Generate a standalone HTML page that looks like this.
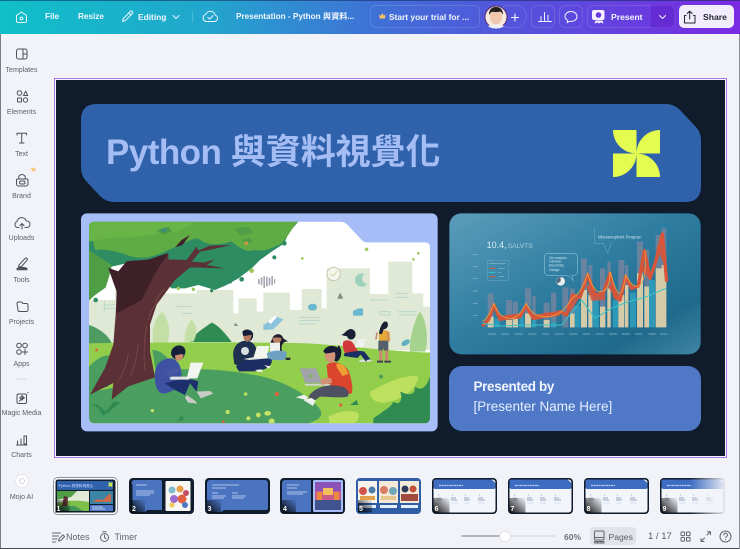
<!DOCTYPE html>
<html lang="zh-Hant">
<head>
<meta charset="utf-8">
<title>Python 與資料視覺化</title>
<style>
html,body{margin:0;padding:0;width:740px;height:549px;overflow:hidden;background:#f2f3f8}
body{position:relative;font-family:"Liberation Sans","Noto Sans CJK TC",sans-serif}
.a{position:absolute;white-space:nowrap}
#top{position:absolute;left:0;top:0;width:740px;height:33.5px;background:linear-gradient(92deg,#0fc0c8 0%,#22a6cd 28%,#3f72d6 50%,#5a4bdd 75%,#7a2be2 100%);box-shadow:inset 0 1px 0 rgba(20,40,90,.55)}
.t{color:#f1f6ff;font-size:8.2px;font-weight:bold;line-height:12px;top:11px}
.pill{position:absolute;top:5px;height:23px;border:1px solid rgba(255,255,255,.13);box-sizing:border-box;border-radius:6px}
.l{position:absolute;left:0;width:43px;text-align:center;font-size:7px;line-height:9px;color:#5a616b;white-space:nowrap}
.b{color:#5f6670;font-size:9px;line-height:12px;top:531px}
svg{position:absolute}
</style>
</head>
<body>
<div id="top"></div>
<div class="a t" style="left:45px">File</div>
<div class="a t" style="left:78px">Resize</div>
<div class="a t" style="left:138px;font-size:8.4px">Editing</div>
<div class="a t" style="left:236px;font-size:8.2px;width:122px;overflow:hidden">Presentation - Python 與資料...</div>
<div class="pill" style="left:370px;width:110px"></div>
<div class="a t" style="left:389px;font-size:8.4px">Start your trial for ...</div>
<div class="pill" style="left:497px;width:30px;border-radius:12px"></div>
<div class="pill" style="left:531px;width:24px"></div>
<div class="pill" style="left:559px;width:24px"></div>
<div class="pill" style="left:587px;width:88px"></div>
<div class="a" style="left:651px;top:5px;width:24px;height:23px;background:rgba(90,20,190,.35);border-radius:0 6px 6px 0"></div>
<div class="a t" style="left:611px;font-size:8.6px">Present</div>
<div class="a" style="left:679px;top:5px;width:55px;height:23px;background:#f2edfd;border-radius:5px"></div>
<div class="a t" style="left:703px;color:#23262c;font-size:8.6px">Share</div>

<!-- top icons -->
<svg style="left:0;top:0" width="740" height="34" viewBox="0 0 740 34" fill="none" stroke="#eef5ff" stroke-width="1" stroke-linecap="round" stroke-linejoin="round">
  <path d="M16.5 15.5 21.5 12l5 3.5V21a1.5 1.5 0 0 1-1.5 1.5h-7a1.500 1.500 0 0 1-1.500-1.500z"/><circle cx="21.5" cy="18.5" r="1.4"/>
  <path d="M122.500 21.500l.8-3 7-7a1.400 1.400 0 0 1 2 2l-7 7z M129 13l2 2"/>
  <path d="M173 15.500l3 3 3-3"/>
  <path d="M192.500 12v10" stroke-opacity=".2"/>
  <path d="M206 21.500h8.500a3.200 3.200 0 0 0 .6-6.300 4.800 4.800 0 0 0-9.200-.9 3.700 3.700 0 0 0 .1 7.200z"/><path d="M207.800 17.400l1.900 1.700 3.200-3.400"/>
  <path d="M379 14.500l1.500 1.200 1.800-2.400 1.800 2.400 1.500-1.200-.7 4h-5.200z" fill="#f3c36a" stroke="none"/>
  <path d="M515 14v7M511.500 17.500h7" stroke-width="1.100"/>
  <path d="M538.500 21.500h13M541 20.500v-4M544.500 20.500v-8M548 20.500v-5.500"/>
  <path d="M571 11.500c3.500 0 6 2.200 6 5s-2.500 5-6 5c-.7 0-1.300-.1-1.900-.3l-1.800 1.600.2-2.500c-1.600-.9-2.500-2.300-2.500-3.800 0-2.800 2.500-5 6-5z"/>
  <path d="M594 10h8.500a2 2 0 0 1 2 2v6a2 2 0 0 1-2 2h-8.500a2 2 0 0 1-2-2v-6a2 2 0 0 1 2-2z" fill="#f4f0ff" stroke="none"/>
  <path d="M595.500 20.500l-1 3 3-1 1.500 1 1.500-1 3 1-1-3z" fill="#f4f0ff" stroke="none"/>
  <circle cx="598.500" cy="15" r="2.800" fill="#6a3bdc" stroke="none"/>
  <path d="M659.500 15.500l3 3 3-3"/>
  <path d="M686 15.500h-1.500v7.500h10.500v-7.500h-1.500M689.700 19v-7.500M687.300 13.500l2.400-2.400 2.400 2.400" stroke="#23262c"/>
  <circle cx="496" cy="17" r="11" fill="#f7e7dc" stroke="#5b2d75" stroke-width="1"/>
  <path d="M489 15c0-6 3-8 7-8s7 2 7 8c-1-2-2-3-3-3.500-2 1-6 1-8 .2-1 .8-2 1.800-3 3.300z" fill="#26201f" stroke="none"/>
  <path d="M490 15.500c0 6 3 9 6 9s6-3 6-9c-1-2-2-3.300-3-3.800-2 .7-4 .7-6 .1-1 .7-2 1.900-3 3.700z" fill="#f0c6ac" stroke="none"/>
  <path d="M488 26c3-2 13-2 16 0-2 2-5 2.500-8 2.500s-6-.5-8-2.500z" fill="#eef0f5" stroke="none"/>
</svg>

<!-- sidebar + border icons -->
<svg style="left:0;top:34px" width="54" height="480" viewBox="0 34 54 480" fill="none" stroke="#4b525c" stroke-width="1" stroke-linecap="round" stroke-linejoin="round">
  <rect x="16.500" y="49" width="10.500" height="10" rx="2"/><path d="M23 49v10M23 54h4"/>
  <circle cx="19.500" cy="93" r="2.300"/><path d="M23.500 95.500l2.200-4.300 2 4.300z"/><rect x="17.500" y="98" width="4" height="4" rx=".8"/><circle cx="25.500" cy="100" r="2.200"/>
  <path d="M17 135v-1.800h9.500V135M21.700 133.200V143M19.500 143h4.500"/>
  <path d="M17.500 179h9.500a1 1 0 0 1 1 1v4a2 2 0 0 1-2 2h-7.500a2 2 0 0 1-2-2v-4a1 1 0 0 1 1-1z"/><path d="M19 179c-1-3 1-4.500 3-4.500s4 1.500 3 4.500"/><rect x="19.500" y="181" width="5.500" height="3" rx="1.500"/>
  <path d="M33 171.500l-3-3.500 1.800.8 1.200-1.800 1.200 1.800 1.800-.8-1 3.500z" fill="#f7c779" stroke="none"/>
  <path d="M19 227.500h-1.500a3 3 0 0 1-.5-5.800 4.800 4.800 0 0 1 9.300-.8 3.300 3.300 0 0 1 .7 6.600H25"/><path d="M22 229v-5.500M20 225.500l2-2 2 2"/>
  <path d="M19 265l6-6.500a1.300 1.300 0 0 1 2 1.800l-5.500 6.200-3 .5z"/><path d="M17 268.500c3-1.500 8-1.500 10 0v1.300H17z" fill="#4b525c"/>
  <path d="M17 303.500a1.500 1.500 0 0 1 1.500-1.500h3l1.500 1.500h3.500a1.500 1.500 0 0 1 1.500 1.500v5a1.500 1.500 0 0 1-1.500 1.500h-7a1.500 1.500 0 0 1-1.500-1.500z"/>
  <circle cx="19" cy="345.500" r="2.300"/><circle cx="25" cy="345.500" r="2.300"/><circle cx="19" cy="352" r="2.300"/><path d="M25 349.500v5M22.500 352h5"/>
  <path d="M17.500 379h8.500" stroke="#d6d8de"/>
  <rect x="17" y="394" width="9.500" height="9.500" rx="1.500"/><path d="M19.500 401l4-4M22 395.500l1 1.500 1.500.8-1.500.8-1 1.500-.8-1.500-1.500-.8 1.500-.8z M28 392.500v.2" stroke-width="1.100"/>
  <path d="M16.500 445h10.500M17.500 444v-3M21 444v-5M24 444v-8h2.500v8z"/>
  <circle cx="22" cy="481" r="6.500" fill="#fff" stroke="#e6e7ec"/><circle cx="22" cy="481" r="2.500" stroke="#c8ccd3" stroke-width=".8"/>
</svg>
<div class="l" style="top:66px">Templates</div>
<div class="l" style="top:108px">Elements</div>
<div class="l" style="top:150px">Text</div>
<div class="l" style="top:192px">Brand</div>
<div class="l" style="top:234px">Uploads</div>
<div class="l" style="top:276px">Tools</div>
<div class="l" style="top:318px">Projects</div>
<div class="l" style="top:360px">Apps</div>
<div class="l" style="top:409px">Magic Media</div>
<div class="l" style="top:451px">Charts</div>
<div class="l" style="top:493px">Mojo AI</div>

<!-- canvas -->
<div class="a" style="left:54px;top:78px;width:673px;height:380px;box-sizing:border-box;border:1px solid #a875e6;background:#f7f5fd"></div>
<div class="a" style="left:56px;top:80px;width:669px;height:376px;background:#101c2c"></div>

<svg style="left:0;top:0" width="740" height="549" viewBox="0 0 740 549">
  <path d="M97 104H666Q674 104 680 110L695 126Q701 132 701 140V186Q701 202 685 202H114Q106 202 100 196L87 182Q81 176 81 168V120Q81 104 97 104Z" fill="#2f62aa"/>
  <g fill="#e4fb4f">
    <path d="M613 130H636.500V153.500A23.500 23.500 0 0 1 613 130Z"/>
    <path d="M660 130V153.500H636.500A23.500 23.500 0 0 1 660 130Z"/>
    <path d="M613 153.500H636.500A23.500 23.500 0 0 1 613 177Z"/>
    <path d="M636.500 153.500A23.500 23.500 0 0 1 660 177H636.500Z"/>
  </g>
  <rect x="449" y="366" width="252" height="65" rx="13" fill="#4f78c6"/>
</svg>
<div class="a" style="left:106px;top:131px;font-size:35px;font-weight:bold;line-height:44px;color:#a5bdf5"><span style="letter-spacing:-.55px">Python</span><span style="letter-spacing:-.1px"> 與資料視覺化</span></div>
<div class="a" style="left:473.500px;top:378px;font-size:13.500px;font-weight:bold;line-height:17px;letter-spacing:-.35px;color:#f0f5ff">Presented by</div>
<div class="a" style="left:473.500px;top:398px;font-size:13.500px;line-height:17px;color:#e6eeff">[Presenter Name Here]</div>

<!-- illustration -->
<svg style="left:75px;top:210px" width="370" height="225" viewBox="0 0 1110 675">
  <defs>
    <clipPath id="ph"><path d="M60 35H795Q808 35 818 45L860 90Q866 97 875 97H1050Q1065 97 1065 112V622Q1065 640 1047 640H60Q42 640 42 622V52Q42 35 60 35Z"/></clipPath>
    <linearGradient id="gr" x1="0" y1="0" x2="1" y2="1"><stop offset="0" stop-color="#5c9dbb"/><stop offset=".45" stop-color="#2f7ea1"/><stop offset=".8" stop-color="#1f6a8c"/><stop offset="1" stop-color="#3f84a3"/></linearGradient>
  </defs>
  <rect x="18" y="10" width="1070" height="654" rx="18" fill="#a6bdf8"/>
  <g clip-path="url(#ph)">
    <rect x="42" y="35" width="1024" height="606" fill="#fff"/>
    <path d="M42 420V270H120V240H250V250H365V240H475V310H490V265H545V305H565V248H645V300H680V237H740V295H755V175H885V252H940V155H1012V250H1045V290H1065V420Z" fill="#dfe9d5"/>
    <g fill="none" stroke="#b9d6cb" stroke-width="3">
      <path d="M88 285h32M88 295h32M88 275v30M300 290h50M320 310h30M672 322h65M672 332h65M672 342h50M970 305h55M970 315h55M885 270h50M963 250h35M963 262h35M915 305h30v10h-30z"/>
    </g>
    <path d="M42 345C60 350 100 370 112 404H42Z" fill="#4f9c63"/>
    <path d="M345 396C360 370 385 355 410 338 430 345 455 375 470 396Z" fill="#2f8b52"/>
    <path d="M235 400C228 360 240 320 262 305 282 330 290 375 275 400ZM330 395C325 370 340 340 350 328 365 345 370 370 355 395Z" fill="#c3dfa6"/>
    <path d="M1005 425C1000 400 1020 320 1035 305 1055 330 1062 395 1050 425Z" fill="#a5d28d"/>
    <path d="M42 400C200 397 500 395 700 400C850 410 960 425 1065 428V640H42Z" fill="#93cd4c"/>
    <path d="M42 640V545C100 540 150 525 230 490C300 470 440 475 540 495C620 510 680 545 720 580C750 610 745 625 700 640Z" fill="#4a9e5f"/>
    <path d="M42 470C70 440 95 430 115 440L100 530 42 545ZM232 420C260 420 280 445 300 470L245 500Z" fill="#4a9e5f"/>
    <path d="M885 545C930 520 990 490 1030 500 1025 540 980 570 930 578 900 580 885 565 885 545Z" fill="#bde05f"/>
    <path d="M760 620C790 605 830 595 850 610 855 625 845 640 830 640H765Z" fill="#bde05f"/>
    <path d="M895 625C930 600 950 590 955 575 975 590 985 565 975 545 1000 555 1020 560 1020 530 1040 545 1055 530 1065 500V640H895Z" fill="#2f8b52"/>
    <!-- canopy -->
    <path d="M42 35H670L640 70 628 100 590 125 555 150 530 175 490 205 455 225 420 240 370 225 330 235 290 235 260 210 200 150 110 170 92 232 60 255 42 270Z" fill="#2e8c62"/>
    <path d="M42 120 110 165 105 190 92 232 60 255 42 272Z" fill="#4f9e45"/>
    <path d="M42 35H668C650 55 640 80 620 100 590 115 570 125 540 120 510 130 490 110 470 95 430 105 400 110 370 85 345 85 320 105 280 120 250 135 210 150 170 140 130 125 90 115 60 120 42 110Z" fill="#5fab44"/>
    <path d="M42 35H360C340 55 300 70 250 70 200 85 130 75 42 95Z" fill="#69b447"/>
    <path d="M245 60l35-10 12 15-30 10zM480 55l40-5 15 18-40 8zM500 90l25-8 8 15-20 6z" fill="#4f9d45"/>
    <path d="M255 60q10-8 22-4l-6 12z" fill="#3a8b7a"/>
    <circle cx="514" cy="100" r="6" fill="#c59948"/>
    <!-- trunk -->
    <path d="M100 174 125 244 122 314 115 404 90 474 45 554 115 519 110 569 160 529 240 502 225 424 225 344 245 284 300 210 345 172 450 175 395 165 420 148 385 158 350 155 375 125 410 118 470 105 405 107 370 122 365 109 335 150 280 148 280 129 220 149 155 154 130 184Z" fill="#5b3036"/>
    <path d="M100 174 130 184 155 154 220 149 280 129 240 190 200 270 125 310 125 244Z" fill="#3e2029"/>
    <path d="M345 75 320 90 300 112 322 105Z" fill="#3e2029"/>
    <g stroke="#7b4a49" stroke-width="2.500" fill="none"><path d="M190 400c-5 40-10 70-25 100M215 350c-8 40-10 100-5 130M160 430c-3 30-15 60-35 90M250 270c-15 20-25 40-30 60M270 235c-12 12-22 26-30 40"/></g>
    <!-- leaves -->
    <g fill="#2e8c62"><circle cx="500" cy="208" r="7"/><circle cx="465" cy="215" r="6"/><circle cx="598" cy="142" r="6"/><circle cx="628" cy="100" r="7"/><circle cx="410" cy="242" r="5"/><circle cx="62" cy="270" r="7"/></g>
    <g fill="#9cc95a"><circle cx="530" cy="182" r="7"/><circle cx="682" cy="145" r="4"/><circle cx="875" cy="118" r="5"/><circle cx="1030" cy="130" r="4"/><circle cx="1015" cy="148" r="4"/><circle cx="310" cy="235" r="5"/><circle cx="355" cy="238" r="5"/></g>
    <!-- floating items -->
    <g fill="#a9a9b5"><rect x="549" y="207" width="5" height="16" rx="2"/><rect x="557" y="202" width="5" height="24" rx="2"/><rect x="565" y="198" width="5" height="36" rx="2"/><rect x="573" y="200" width="5" height="30" rx="2"/><rect x="581" y="203" width="5" height="24" rx="2"/><rect x="589" y="198" width="5" height="28" rx="2"/><rect x="597" y="207" width="4" height="14" rx="2"/></g>
    <circle cx="776" cy="192" r="20" fill="#f4f7ec" stroke="#c9c5a8" stroke-width="3"/><path d="M766 192l8 6 12-14" stroke="#d5d29c" stroke-width="3" fill="none"/>
    <path d="M868 192a20 20 0 1 0 8 30 17 17 0 0 1-8-30Z" fill="#9cd2bb"/>
    <path d="M710 282c15-4 18 8 14 16-8 6-24 4-25-6 0-7 5-9 11-10ZM850 295h14v22h-30v-14z" fill="#69b8cf"/>
    <path d="M565 345l40-25 20 8-30 30-30 2z" fill="#8bc3dd"/><path d="M580 335l20-18 5 5-18 20z" fill="#fff"/>
    <path d="M795 248l10 18h-18z" fill="#7f8d79"/><path d="M480 338l10 10h-12z" fill="#7f8d79"/>
    <ellipse cx="992" cy="398" rx="14" ry="8" transform="rotate(-30 992 398)" fill="#62b0bf"/>
    <!-- person 1 -->
    <path d="M240 495C240 460 260 445 290 445 310 450 320 470 320 500 315 530 290 552 260 550 245 545 238 520 240 495Z" fill="#3e51a3"/>
    <path d="M270 520C300 510 340 500 370 515L365 545 345 520 330 555 300 540Z" fill="#1e2f6e"/>
    <path d="M335 555l24 16 8 10-27-3-10-14zM365 545l40-2 10 8-38 14z" fill="#c9ccc6"/>
    <path d="M288 430c0-18 20-28 33-22 12 5 12 20 8 26-3 10-10 18-20 16-12-2-20-10-21-20z" fill="#17203a"/>
    <path d="M300 436c5 0 18-6 26-2-2 14-12 22-20 17-4-3-6-8-6-15z" fill="#c98a70"/>
    <path d="M283 500h64l-5 9h-56z" fill="#e4e6e0"/><path d="M347 458h38l-18 47h-32z" fill="#f2f4f0"/>
    <path d="M270 490c15-12 30-20 45-17l2 12c-15 0-25 10-30 18z" fill="#46589f"/>
    <!-- person 2 -->
    <path d="M475 440C472 410 490 392 515 392 540 395 550 420 545 445H530L495 470 478 462Z" fill="#1e2f4f"/>
    <circle cx="510" cy="423" r="12" fill="#d6dde0"/>
    <path d="M483 470C510 445 560 435 590 445 595 470 570 480 540 484H492Z" fill="#1c2d63"/>
    <path d="M502 365c10-12 28-6 32 5 2 10-2 18-8 22-10 4-22-5-24-27z" fill="#17203a"/>
    <path d="M505 378c8 0 18-3 25-3-2 14-8 20-15 20-6-2-10-8-10-17z" fill="#b97b60"/>
    <path d="M505 447l28-5 50-4-5 7-55 5z" fill="#e3e5df"/><path d="M546 408h37l-8 36h-40z" fill="#f3f5ef"/>
    <path d="M540 480l20-2 5 6-15 2zM568 465l20 5-8 6z" fill="#eef0ea"/>
    <!-- person 3 -->
    <path d="M590 390c5-20 28-25 35-5l15 10c-15-3-25 12-18 30h-30c-10-10-8-25-2-35z" fill="#1f1f33"/>
    <path d="M592 385c10-5 20-4 28 0-3 12-8 16-14 16-8-2-13-8-14-16z" fill="#ba7d62"/>
    <path d="M585 398h30v28h-30z" fill="#eef0ed"/>
    <path d="M575 430c15-10 45-10 58-5 4 10 0 22-8 25-15 2-35 0-45-5z" fill="#6ea0c4"/>
    <path d="M632 443h14v7h-14z" fill="#2a2b3d"/>
    <!-- person 4 -->
    <path d="M755 465C770 450 800 455 820 480 830 510 835 535 830 550 810 555 780 545 760 520Z" fill="#d9462d"/>
    <path d="M783 462c15-5 30 5 37 30l-18 6-16-25z" fill="#ee9f33"/>
    <path d="M700 560C720 530 760 520 800 530 820 535 825 550 818 560 790 565 760 560 735 560L715 575Z" fill="#4d5161"/>
    <path d="M662 562l25-8 12 8-5 8zM685 570l25-6 12 8-8 16z" fill="#eef0ec"/>
    <path d="M745 425c5-18 30-22 42-12l5-8 6 14c3 15-2 30-12 36-8-3-20-8-25-16z" fill="#161c33"/>
    <path d="M748 430c12 2 25-4 32-3 3 12 0 30-10 32-12 0-20-12-22-29z" fill="#d19278"/>
    <path d="M674 475h50l17 45h-50z" fill="#a0a4a8"/><path d="M690 522h78l-8 5h-70z" fill="#d5d6d4"/>
    <circle cx="707" cy="498" r="5" fill="#83b35c"/>
    <path d="M737 510c10-5 20-8 32-5l2 14-32 6z" fill="#d19278"/>
    <!-- person 5 -->
    <path d="M805 395c10-8 25-5 33 10l15 25-35 10c-10-10-18-30-13-45z" fill="#d1383a"/>
    <path d="M808 430c20-5 45-10 60-5l20 25-16 4-15-20-10 10-35-5c-7 0-6-5-4-9z" fill="#1c2d63"/>
    <path d="M798 375c10-2 15-15 28-18 12 0 18 10 15 22-5 8-10 12-20 8l-5-8z" fill="#191f35"/>
    <path d="M848 387h26l-10 25h-25z" fill="#eef1ed"/>
    <path d="M853 450l13-2 8 8h-20zM874 450l12-2 6 5-15 3z" fill="#d9ded9"/>
    <!-- person 6 -->
    <path d="M912 365c12-6 26-6 32 3l2 25h-34z" fill="#e6a838"/>
    <path d="M910 392h30v30h-12l-3-6-3 6h-12z" fill="#55606b"/>
    <path d="M912 422h10v30h-10zM930 422h10v30h-10z" fill="#c98b6f"/>
    <path d="M906 452h18v6h-18zM928 452h20v6h-20z" fill="#3b4150"/>
    <path d="M912 370c2-15 8-30 16-35 10-2 12 5 10 15-4 6-8 8-12 8l-6 15z" fill="#191f35"/>
    <path d="M938 365l3 30M906 368l-3 20" stroke="#c98b6f" stroke-width="5"/>
    <!-- confetti -->
    <g fill="#c6e366"><circle cx="512" cy="552" r="5"/><circle cx="550" cy="615" r="7"/><ellipse cx="578" cy="610" rx="10" ry="7"/><circle cx="520" cy="625" r="6"/><circle cx="590" cy="634" r="9"/><circle cx="232" cy="602" r="5"/><circle cx="458" cy="606" r="6"/></g>
    <g fill="#e85f3c"><circle cx="606" cy="552" r="6"/><circle cx="797" cy="585" r="5"/><circle cx="445" cy="635" r="4"/><circle cx="65" cy="420" r="4"/></g>
    <path d="M45 580l25 5 22 20 24-30 20 2-36 30-16 10-14-22zM310 635l18-8-10-14z" fill="#2f8b52"/>
    <path d="M595 480c25-5 45 2 60 25-20 5-45 2-60-25z" fill="#93cd4c"/>
    <path d="M825 585l20-15 5 15z" fill="#2f8b52"/><circle cx="918" cy="500" r="6" fill="#4b9e5d"/>
  </g>
</svg>

<!-- chart panel -->
<svg style="left:445px;top:210px" width="260" height="225" viewBox="0 0 780 675">
  <rect x="13" y="10" width="754" height="423" rx="36" fill="url(#gr)"/>
  <path fill="#7f86a0" fill-opacity=".72" d="M128 250h18V352h-18zM183 270h18V352h-18zM203 275h16V352h-16zM240 235h18V352h-18zM262 258h10V352h-10zM296 278h18V352h-18zM318 248h16V352h-16zM352 232h18V352h-18zM375 236h14V352h-14zM408 145h18V352h-18zM430 165h12V352h-12zM465 175h16V352h-16zM487 155h10V352h-10zM520 150h18V352h-18zM540 165h10V352h-10zM576 95h18V352h-18zM598 120h14V352h-14zM632 75h18V352h-18zM650 55h14V352h-14z"/>
  <path fill="#2f9dbb" fill-opacity=".9" d="M148 325h16V352h-16zM223 320h14V352h-14zM260 330h14V352h-14zM318 335h16V352h-16zM390 288h16V352h-16zM443 258h18V352h-18zM503 270h16V352h-16zM555 248h18V352h-18zM612 210h18V352h-18z"/>
  <path fill="#dacfaa" fill-opacity=".95" d="M128 320h18V352h-18zM183 330h18V352h-18zM203 318h16V352h-16zM240 310h18V352h-18zM296 330h18V352h-18zM375 310h14V352h-14zM408 240h18V352h-18zM430 255h12V352h-12zM465 290h16V352h-16zM487 235h10V352h-10zM520 255h18V352h-18zM540 225h10V352h-10zM576 190h18V352h-18zM598 230h14V352h-14zM632 175h18V352h-18zM650 165h14V352h-14z"/>
  <path d="M112 348 130 330 147 285 165 328 185 322 205 318 225 320 243 288 265 325 285 322 305 312 325 315 345 305 365 315 382 255 405 262 428 195 450 255 475 250 495 190 510 262 525 270 542 200 560 235 580 228 598 122 615 205 632 155 652 72 665 215" fill="none" stroke="#d8553a" stroke-width="10" stroke-linejoin="round"/>
  <path d="M165 325 225 318M265 322 345 310M370 300 395 262M430 225 445 265 480 262M495 225 520 265M590 170 612 195M640 110 660 150" fill="none" stroke="#d8553a" stroke-width="15" stroke-opacity=".85"/>
  <path d="M112 335Q130 325 147 280Q160 320 190 325T243 280Q265 325 310 320T380 265Q410 250 428 190Q445 250 470 245T495 185Q515 255 525 250T542 195Q565 240 585 225T600 120" fill="none" stroke="#eda13c" stroke-width="2.500"/>
  <path d="M112 340 170 348 240 345 350 345 370 320 410 270 450 325 500 295 550 275 600 262 650 240 665 235" fill="none" stroke="#38c6c6" stroke-width="3"/>
  <g fill="#cfe4ee" font-family="'Liberation Sans',sans-serif">
    <text x="125" y="114" font-size="27" fill="#d9eaf2">10.4,</text>
    <text x="188" y="114" font-size="20" fill="#a9cde0">SALVTS</text>
    <text x="458" y="86" font-size="12.500">Ioheseneplcint Penpow</text>
    <text x="312" y="147" font-size="9.500">Our analysis</text>
    <text x="312" y="158" font-size="9.500">Carbone</text>
    <text x="312" y="170" font-size="10.500">Electricity</text>
    <text x="312" y="183" font-size="11">Usage</text>
  </g>
  <path d="M448 55V100H475L487 130 499 100" fill="none" stroke="#9ec7da" stroke-width="1"/>
  <path d="M298 142q0-12 12-12h75q12 0 12 12v42q0 12-12 12h-5l5 16-16-16h-59q-12 0-12-12z" fill="none" stroke="#a8d0e1" stroke-width="1.500"/>
  <rect x="127" y="151" width="63" height="60" fill="none" stroke="#6fa8c2" stroke-width="1.500"/>
  <path d="M132 175h20" stroke="#d8553a" stroke-width="3"/><path d="M132 187h20" stroke="#38c6c6" stroke-width="3"/><path d="M132 200h20" stroke="#d8553a" stroke-width="3"/>
  <path d="M160 175h20M160 187h8M160 200h18M132 160h50" stroke="#9cc6d8" stroke-width="1.500"/>
  <circle cx="347" cy="214" r="13" fill="#e9eef0"/><path d="M347 201a13 13 0 0 0-10 20l10-7z" fill="#51697a"/>
  <g stroke="#8fb9cc" stroke-width="2"><path d="M84 133h14M84 170h14M84 205h14M84 243h14M84 280h14M84 316h14"/><path d="M128 372h26M168 372h24M208 372h26M250 372h24M292 372h20M330 372h26M372 372h26M414 372h22M452 372h24M492 372h24M530 372h24M570 372h22M610 372h22M645 372h22"/></g>
</svg>

<!-- thumbnails -->
<svg style="left:0;top:470px" width="740" height="50" viewBox="0 470 740 50">
  <defs>
    <linearGradient id="sh" x1="0" y1="1" x2="1" y2="0"><stop offset="0" stop-color="#000" stop-opacity=".95"/><stop offset=".45" stop-color="#000" stop-opacity=".5"/><stop offset="1" stop-color="#000" stop-opacity="0"/></linearGradient>
    <linearGradient id="fd" x1="0" y1="0" x2="1" y2="0"><stop offset="0" stop-color="#f2f3f8" stop-opacity="0"/><stop offset="1" stop-color="#f2f3f8" stop-opacity=".95"/></linearGradient>
    <g id="pw">
      <rect x="0" y="0" width="65" height="36" rx="4" fill="#101c2c"/>
      <rect x="1.500" y="1.500" width="62" height="33" rx="3" fill="#f3f5fc"/>
      <path d="M1.500 3.500a2 2 0 0 1 2-2h56l4 3.500v4a2 2 0 0 1-2 2H3.500a2 2 0 0 1-2-2z" fill="#3d6cc1"/>
      <path d="M7 7.500h24" stroke="#b8caf2" stroke-width="1.300" stroke-dasharray="2 .5"/>
      <g fill="none" stroke="#9aa6bd" stroke-width=".9"><path d="M6 17h1M20 17h1M33 17h1M47 17h1"/><path d="M5 20h4M5 22h5M19 20h5M19 22h6M32 20h5M32 22h6M46 20h5M46 22h7"/></g>
      <g fill="none" stroke="#c4ccda" stroke-width=".6"><path d="M5 25h5M19 25h7M32 25h6M46 25h7"/></g>
      <rect x="1.500" y="20" width="16" height="14.500" fill="url(#sh)"/>
    </g>
  </defs>
  <!-- 1 -->
  <rect x="53.500" y="477.500" width="64" height="37" rx="4.500" fill="#fff" stroke="#8d929c"/>
  <rect x="55.500" y="479.500" width="60" height="33" rx="2.500" fill="#101c2c"/>
  <rect x="57" y="481" width="56" height="9" rx="1" fill="#2f62aa"/>
  <text x="58.500" y="487" font-size="3.600" font-weight="bold" fill="#a5bdf5" font-family="'Liberation Sans','Noto Sans CJK TC',sans-serif">Python 與資料視覺化</text>
  <g fill="#e4fb4f"><path d="M108.500 482.500h2v2a2 2 0 0 1-2-2zM112.500 482.500v2h-2a2 2 0 0 1 2-2zM108.500 484.500h2a2 2 0 0 1-2 2zM110.500 484.500a2 2 0 0 1 2 2h-2z"/></g>
  <rect x="57" y="491" width="32" height="20" fill="#dfe9d5"/>
  <path d="M57 491h20l-6 6-10 2-4 1z" fill="#4f9e45"/><path d="M57 503c10-3 22-3 32-1v9H57z" fill="#7fc04c"/><path d="M61 511l3-15 4 1-1 14z" fill="#5e3237"/><path d="M57 506l18 0 8 5H57z" fill="#3f9357"/>
  <rect x="90" y="491" width="23" height="13" fill="#3a85a6"/><path d="M92 502l6-3 5 1 4-4 4-3v9z" fill="#c96a4e"/>
  <rect x="90" y="505" width="23" height="6" fill="#4f78c6"/><path d="M92 507h11M92 509h13" stroke="#dfe8fb" stroke-width=".7"/>
  <rect x="55.500" y="500" width="14" height="12.500" fill="url(#sh)"/>
  <!-- 2 -->
  <rect x="129" y="478" width="65" height="36" rx="4" fill="#101c2c"/>
  <path d="M131.500 483a3 3 0 0 1 3-3H160a2 2 0 0 1 2 2v28H150l-3 0-2 2h-12.500V485z" fill="#4a74c0"/>
  <rect x="165.500" y="481" width="25" height="30" rx="1" fill="#f7f7f4"/>
  <g fill="#e7a04a"><circle cx="172" cy="490" r="3.500" fill="#7cbccb"/><circle cx="180" cy="489" r="3.500"/><circle cx="186" cy="493" r="3" fill="#c24d66"/><circle cx="174" cy="499" r="4" fill="#9c6ad0"/><circle cx="182" cy="499" r="4.500" fill="#e25f3f"/><circle cx="172" cy="505" r="2.500" fill="#f0c854"/><circle cx="185" cy="505" r="3" fill="#4c79c4"/></g>
  <path d="M136 485h11M136 491h18M136 493h18M136 495h14" stroke="#cfdcf7" stroke-width=".8"/>
  <rect x="131" y="500" width="14" height="12.500" fill="url(#sh)"/>
  <!-- 3 -->
  <rect x="205" y="478" width="65" height="36" rx="4" fill="#101c2c"/>
  <path d="M207 483a3 3 0 0 1 3-3H265a3 3 0 0 1 3 3v25a2 2 0 0 1-2 2H224l-3 2h-14z" fill="#4a74c0"/>
  <path d="M212 485h27M212 488h14M212 493h6M232 493h6M212 496h14M232 496h14M212 498h12M232 498h12" stroke="#cfdcf7" stroke-width=".8"/>
  <rect x="207" y="500" width="14" height="12.500" fill="url(#sh)"/>
  <!-- 4 -->
  <rect x="280" y="478" width="65" height="36" rx="4" fill="#101c2c"/>
  <path d="M282 483a3 3 0 0 1 3-3H311v32H282z" fill="#4a74c0"/>
  <rect x="313" y="480" width="30" height="32" rx="1.500" fill="#a6bdf8"/>
  <rect x="315" y="482" width="26" height="28" fill="#c85a8c"/>
  <rect x="315" y="482" width="26" height="9" fill="#8c52b8"/><rect x="323" y="488" width="10" height="7" fill="#f2c05c"/><rect x="317" y="492" width="5" height="8" fill="#ec8a3e"/><rect x="334" y="492" width="5" height="8" fill="#ec8a3e"/><rect x="315" y="500" width="26" height="10" fill="#41538e"/>
  <path d="M287 485h12M287 488h10M287 492h20M287 494h16" stroke="#cfdcf7" stroke-width=".8"/>
  <rect x="282" y="500" width="14" height="12.500" fill="url(#sh)"/>
  <!-- 5 -->
  <rect x="356" y="478" width="65" height="36" rx="4" fill="#2f5ea6"/>
  <rect x="358" y="481" width="19" height="22" fill="#f7f4ee"/><rect x="379" y="481" width="19" height="22" fill="#f6e8d9"/><rect x="400" y="481" width="19" height="22" fill="#f4ead8"/>
  <circle cx="363" cy="491" r="4" fill="#d0544a"/><circle cx="372" cy="490" r="3.500" fill="#4d7ca6"/><rect x="360" y="496" width="15" height="4" fill="#e3a14e"/>
  <circle cx="384" cy="490" r="4" fill="#d97c65"/><circle cx="393" cy="491" r="4" fill="#6ea7b6"/><rect x="381" y="496" width="15" height="4" fill="#e6c68a"/>
  <circle cx="405" cy="489" r="3.500" fill="#2d3a5c"/><circle cx="413" cy="489" r="3.500" fill="#c1503d"/><rect x="401" y="494" width="17" height="7" fill="#a2493f"/>
  <rect x="359" y="505" width="17" height="3" fill="#e6edfb"/><rect x="380" y="505" width="17" height="3" fill="#e6edfb"/><rect x="401" y="505" width="17" height="3" fill="#e6edfb"/>
  <rect x="358" y="500" width="14" height="12.500" fill="url(#sh)"/>
  <!-- 6-9 -->
  <use href="#pw" x="432" y="478"/>
  <use href="#pw" x="508" y="478"/>
  <use href="#pw" x="584" y="478"/>
  <use href="#pw" x="660" y="478"/>
  <rect x="690" y="476" width="36" height="40" fill="url(#fd)"/>
  <g font-family="'Liberation Sans',sans-serif" font-size="7" font-weight="bold" fill="#fff">
    <text x="56.500" y="511">1</text><text x="132" y="511">2</text><text x="207.500" y="511">3</text><text x="283" y="511">4</text><text x="359" y="511">5</text><text x="434.500" y="511">6</text><text x="510.500" y="511">7</text><text x="586.500" y="511">8</text><text x="662.500" y="511">9</text>
  </g>
</svg>

<!-- bottom bar -->
<div class="a b" style="left:66px">Notes</div>
<div class="a b" style="left:114.500px">Timer</div>
<div class="a b" style="left:564px;font-weight:bold;color:#6a7079;font-size:8.500px">60%</div>
<div class="a" style="left:590px;top:527px;width:46px;height:18px;border-radius:4px;background:#e2e3e8"></div>
<div class="a b" style="left:608.500px;top:531px;font-size:8.600px;color:#555c66">Pages</div>
<div class="a b" style="left:648px;font-size:9.500px;color:#555c66">1 / 17</div>
<svg style="left:0;top:525px" width="740" height="22" viewBox="0 525 740 22" fill="none" stroke="#5f6670" stroke-width="1" stroke-linecap="round" stroke-linejoin="round">
  <path d="M52.500 533h8M52.500 536h6M52.500 539h4.500M52.500 542h3M58.500 541l.6-2.300 3.800-3.800 1.700 1.700-3.800 3.800z"/>
  <circle cx="104.500" cy="537.500" r="4"/><path d="M104.500 535v2.700l1.600 1M102.800 531.800h3.400"/>
  <path d="M462 536h43" stroke="#9ea2aa" stroke-width="1.400"/><path d="M505 536h50" stroke="#d2d4da" stroke-width="1"/>
  <circle cx="505" cy="536.500" r="5.300" fill="#fff" stroke="#dcdde2" stroke-width=".8"/>
  <rect x="594.500" y="531" width="9.500" height="9" rx="1"/><path d="M594.500 537.500h9.500M594.500 541.500h9.500v1.500h-9.500zM597.500 541.500v1.500M600.800 541.500v1.500" stroke-width=".9"/>
  <rect x="681" y="532" width="3.600" height="3.600" rx=".6"/><rect x="686.500" y="532" width="3.600" height="3.600" rx=".6"/><rect x="681" y="537.500" width="3.600" height="3.600" rx=".6"/><rect x="686.500" y="537.500" width="3.600" height="3.600" rx=".6"/>
  <path d="M707 535l3.500-3.300M707.500 531.700h3v3M704.500 538l-3.500 3.500M701 538.500v3h3"/>
  <circle cx="725.500" cy="536.500" r="5.500"/>
  <path d="M723.800 535a1.800 1.800 0 1 1 2.700 1.500c-.6.400-.9.700-.9 1.300M725.600 539.500v.1"/>
</svg>

<!-- window edges -->
<div class="a" style="left:0;top:34px;width:1px;height:515px;background:#7a7d85"></div>
<div class="a" style="left:0;top:548px;width:740px;height:1px;background:#4a4d55"></div>
<div class="a" style="left:739px;top:34px;width:1px;height:515px;background:#8a8d95"></div>
</body>
</html>
